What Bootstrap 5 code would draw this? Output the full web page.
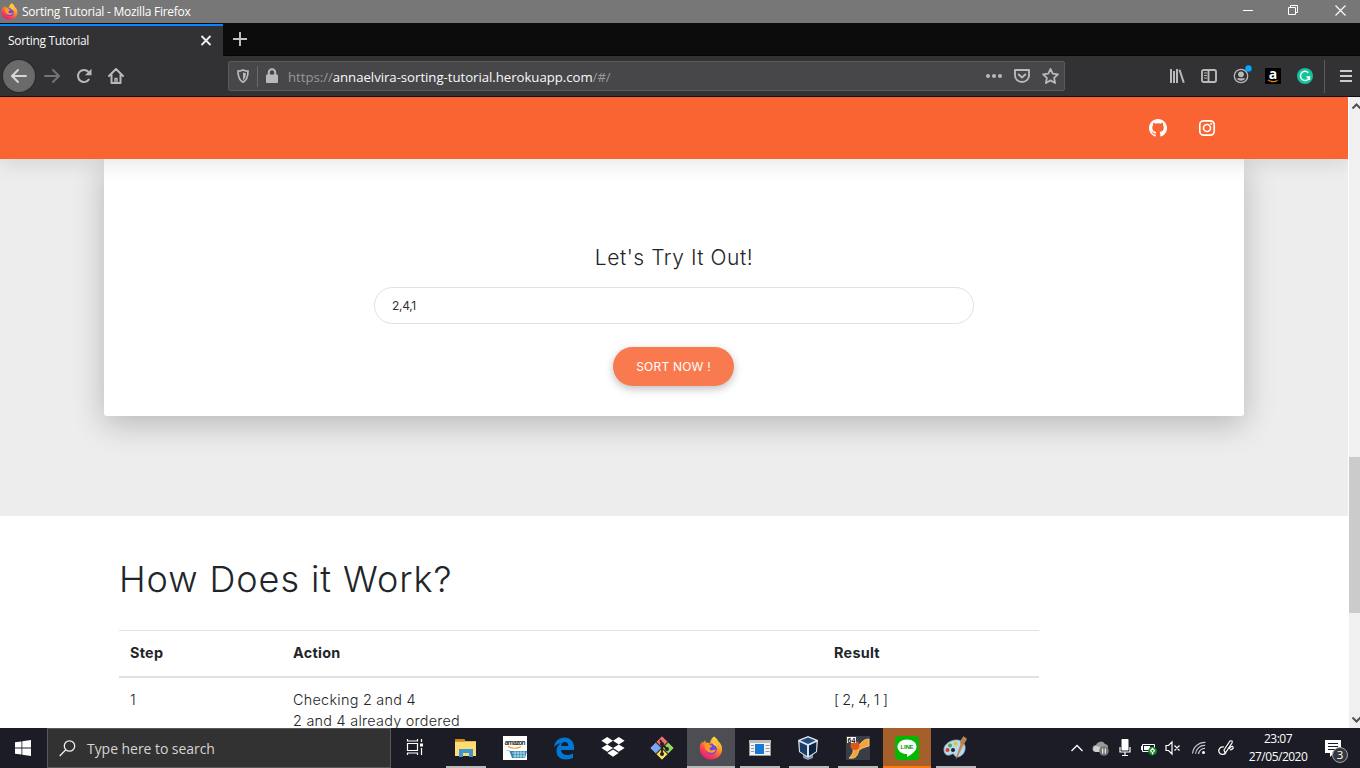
<!DOCTYPE html>
<html lang="en">
<head>
<meta charset="utf-8">
<meta name="viewport" content="width=device-width, initial-scale=1">
<title>Sorting Tutorial</title>
<link href="https://cdn.jsdelivr.net/npm/bootstrap@5.3.0/dist/css/bootstrap.min.css" rel="stylesheet">
<style>
body{height:768px;overflow:hidden;font-family:"Open Sans","Noto Sans",sans-serif;background:#fff}
svg{display:block;flex:none}
.title-bar{height:23px;background:#777;color:#fff;font-size:12px;letter-spacing:-.25px;line-height:23px}
.win-btn{width:38px;height:21px}
.win-restore{width:53px}
.win-close{width:40px}
.tab-strip{height:33px;background:#0c0c0d;border-bottom:1px solid #070708}
.ff-tab{width:223px;margin-top:1px;height:32px;background:#323234;border-top:2px solid #0a84ff;color:#f9f9fa;font-size:12px;letter-spacing:-.32px;margin-bottom:-1px}
.tool-bar{height:41px;background:#323234;border-bottom:1px solid #0f0f10;color:#b9b9ba}
.tool{width:32px;height:32px;display:flex;align-items:center;justify-content:center;flex:none}
.back-btn{background:#6a6a6b;border-radius:50%;box-shadow:0 0 0 1px #29292b;color:#d7d7d8;margin:0 1px 0 3px}
.url-box{width:837px;height:30px;background:#474749;border:1px solid #5b5b5d;border-radius:2px;margin-left:96px;font-size:13.2px}
.url-text{color:#98989a;letter-spacing:-.03px;white-space:nowrap;margin-left:10px;padding-top:3px}
.url-text span{color:#f9f9fa}
.tool-sep{width:1px;height:33px;background:#5b5b5d;margin:0 15px 0 3px}
.page-view{height:631px}
.site{width:1348px;height:631px;overflow:hidden;font-family:Inter,"Open Sans",sans-serif;font-weight:300;color:#212529}
.site-nav{height:62px;background:#fa6433;padding-right:132px;gap:31px;z-index:2;box-shadow:0 5px 20px rgba(0,0,0,.1)}
.hero{height:357px;background:#ededed}
.try-card{width:1140px;height:257px;border-radius:0 0 3px 3px;box-shadow:0 8px 32px rgba(0,0,0,.23);padding-top:83px}
.try-title{font-size:21px;line-height:32px;font-weight:300;letter-spacing:.53px;margin-bottom:13px}
.num-input{width:600px;height:37px;border:1px solid #e1e1e1;border-radius:19px;padding:0 17px;font-size:12px;font-weight:400;letter-spacing:-.3px;color:#333}
.num-input:focus{box-shadow:none}
.sort-btn{margin:23px 1px 0 0;width:121px;height:39px;border-radius:20px;border:0;background:#fa7a50;color:#fff;font-size:12px;letter-spacing:.2px;padding:0;box-shadow:0 3px 8px rgba(0,0,0,.25)}
.sort-btn:hover{background:#fa7a50;color:#fff}
.steps{width:1140px;padding:38px 15px 0}
.steps h2{font-size:36px;line-height:50px;font-weight:300;letter-spacing:.93px;margin-bottom:26px}
.step-table{width:920px;table-layout:fixed;font-size:14.4px;line-height:21px;color:#212529;letter-spacing:.27px}
.step-table>thead th{font-weight:700;padding:11px 11px 13px;border-top:1px solid #dee2e6;border-bottom:2px solid #dee2e6;height:46px;background:none}
.step-table>tbody td{padding:11px;border:0;background:none}
.step-table>tbody td.list-out{letter-spacing:-.35px}
.scroll-rail{width:12px;border-left:1px solid #fff;background:#f0f0f0}
.scroll-thumb{height:156px;background:#cbcbcb;margin-top:343px}
.task-bar{height:40px;background:#1b1c25;color:#fff}
.start-btn{width:47px;height:40px}
.search-box{width:344px;height:40px;background:#323232;border:1px solid #59595b;color:#d4d4d4;font-size:14px}
.app-btn{width:48px;height:40px;margin-right:1px;display:flex;flex-direction:column;align-items:center;flex:none}
.app-btn svg{margin-top:8px}
.app-btn.open-app::after{content:"";width:40px;height:2px;margin-top:6px;background:#b9b9b7}
.app-btn.wide-line::after{width:48px}
.app-btn.line-app{background:#a55f2a}
.app-btn.line-app::after{background:#ff7a0c}
.tray-icon{width:24px;height:40px;display:flex;align-items:center;justify-content:center;flex:none}
.clock{width:76px;font-size:12px;line-height:18px;letter-spacing:-.5px;text-align:center;padding-top:2px}
</style>
</head>
<body>
<svg width="0" height="0" class="position-absolute">
  <defs>
    <linearGradient id="fxBody" x1=".85" y1="0" x2=".25" y2="1"><stop offset="0" stop-color="#fff04a"/><stop offset=".4" stop-color="#ff9a28"/><stop offset=".72" stop-color="#ff4150"/><stop offset="1" stop-color="#e31587"/></linearGradient>
    <symbol id="firefox" viewBox="0 0 24 24">
      <path fill="url(#fxBody)" d="M15 .5c2.500 1.500 3.400 3 4.200 4.700C22.400 7.700 23.500 11 23 14.500 22.200 19.800 17.800 23.500 12 23.500 5.600 23.500.8 18.800.8 12.700c0-3 .9-5.500 2.400-7.200l.3 1.700C4.400 5.900 5.300 5 6.200 4.300l.5 2.200c1.600-.3 3 .1 4.200.8C11.300 4.600 12.700 2 15 .5z"/>
      <circle cx="12.400" cy="13" r="5.500" fill="#7048df"/>
      <path fill="#ff9a28" d="M5.500 8.300c2.300-1.200 4.200-.7 5.400.6l2.300.5c-.2 1.500-2.200 1.700-2.700 2.900-.2 1.300 1 2.500 3 2 1.300-.3 2-.8 3.200-.1-.8 1.800-2.700 2.800-4.900 2.600-4-.4-6.700-4-6.300-8.500z"/>
      <path fill="#ffd43a" d="M14.200 3.500c.5 3 4 4.300 4.400 9-.8-1.700-1.500-2.300-2.600-3-2-.8-3.200-3-1.800-6z"/>
    </symbol>
  </defs>
</svg>

<header class="title-bar d-flex align-items-center">
  <svg width="17" height="17" style="margin-left:1px"><use href="#firefox"/></svg>
  <span class="ms-1">Sorting Tutorial - Mozilla Firefox</span>
  <div class="ms-auto d-flex h-100">
    <div class="win-btn d-flex align-items-center justify-content-center"><svg width="11" height="11"><path d="M0 5.500h10" stroke="#fff"/></svg></div>
    <div class="win-btn win-restore d-flex align-items-center justify-content-center"><svg width="11" height="11" fill="none" stroke="#fff"><path d="M.5 2.500h7v7h-7zM2.500 2.500v-2h7v7h-2"/></svg></div>
    <div class="win-btn win-close d-flex align-items-center justify-content-center"><svg width="11" height="11"><path d="M.5.5l10 10m0-10l-10 10" stroke="#fff" stroke-width="1.100"/></svg></div>
  </div>
</header>

<div class="tab-strip d-flex">
  <div class="ff-tab d-flex align-items-center justify-content-between ps-2">
    <span>Sorting Tutorial</span>
    <svg class="me-2" width="18" height="18"><path d="M4.500 4l9 9m0-9l-9 9" stroke="#eee" stroke-width="1.900"/></svg>
  </div>
  <svg class="ms-2" width="18" height="32"><path d="M9 9v14M2 16h14" stroke="#c5c5c6" stroke-width="1.900"/></svg>
</div>

<nav class="tool-bar d-flex align-items-center">
  <div class="tool back-btn"><svg width="16" height="16" fill="none" stroke="currentColor" stroke-width="2" stroke-linecap="round" stroke-linejoin="round"><path d="M15 8H1.500M7 2L1 8l6 6"/></svg></div>
  <div class="tool" style="color:#747476"><svg width="16" height="16" fill="none" stroke="currentColor" stroke-width="2" stroke-linecap="round" stroke-linejoin="round"><path d="M1 8h13.500M9 2l6 6-6 6"/></svg></div>
  <div class="tool"><svg width="16" height="16"><path d="M13.200 11A6 6 0 1 1 12.500 4" fill="none" stroke="currentColor" stroke-width="2"/><path d="M15.500.8v6.500H9z" fill="currentColor"/></svg></div>
  <div class="tool"><svg width="16" height="16" fill="none" stroke="currentColor" stroke-width="2" stroke-linejoin="round" stroke-linecap="round"><path d="M1 8l7-7 7 7M3.500 7v8h9V7"/><path d="M7 14v-3.500h2V14" stroke-width="1.400"/></svg></div>

  <div class="url-box d-flex align-items-center">
    <svg width="29" height="28"><g transform="translate(7,7)"><path d="M7 1c2 .9 3.500 1.200 5 1.200 0 5.500-1 8.800-5 11-4-2.200-5-5.500-5-11C3.500 2.200 5 1.900 7 1z" fill="none" stroke="#b9b9ba" stroke-width="1.700"/><path d="M7 3.500v7.700c2-1.500 2.800-3.500 2.900-7z" fill="#b9b9ba"/></g><path d="M28.500 4v21" stroke="#6b6b6d"/></svg>
    <svg class="ms-2" width="12" height="16" fill="#b9b9ba"><path d="M1 6.500h10a1 1 0 0 1 1 1V14a1 1 0 0 1-1 1H1a1 1 0 0 1-1-1V7.500a1 1 0 0 1 1-1z"/><path d="M2.800 7V4.500a3.200 3.200 0 0 1 6.400 0V7" fill="none" stroke="#b9b9ba" stroke-width="2"/></svg>
    <div class="url-text">https://<span>annaelvira-sorting-tutorial.herokuapp.com</span>/#/</div>
    <div class="ms-auto d-flex align-items-center" style="gap:12px;margin-right:5px">
      <svg width="16" height="16" fill="#b9b9ba"><circle cx="2" cy="8" r="2"/><circle cx="8" cy="8" r="2"/><circle cx="14" cy="8" r="2"/></svg>
      <svg width="16" height="16" fill="none" stroke="#b9b9ba" stroke-width="1.900" stroke-linecap="round" stroke-linejoin="round"><path d="M1 2h14v5.500a7 6.500 0 0 1-14 0zM4.700 6.500L8 9.500l3.300-3"/></svg>
      <svg width="17" height="16" fill="none" stroke="#b9b9ba" stroke-width="1.800" stroke-linejoin="round"><path d="M8.500 1l2.200 4.600 5.200.7-3.800 3.500 1 5.200-4.600-2.600L3.900 15l1-5.200L1.100 6.300l5.200-.7z"/></svg>
    </div>
  </div>

  <div class="d-flex ms-auto align-items-center">
    <div class="tool"><svg width="16" height="16" fill="none" stroke="currentColor" stroke-width="2"><path d="M2 1v14M5 3v12M8 1v14M10.500 1.800l4.300 13"/></svg></div>
    <div class="tool"><svg width="16" height="16" fill="none" stroke="currentColor" stroke-width="1.900"><rect x="1" y="2" width="14" height="12" rx="1.700"/><path d="M7.500 2v12"/><path d="M3 5h3M3 7.500h3M3 10h3" stroke-width="1.200"/></svg></div>
    <div class="tool position-relative"><svg width="16" height="16"><circle cx="8" cy="8" r="6.700" fill="none" stroke="currentColor" stroke-width="1.300"/><circle cx="8" cy="6.300" r="2.900" fill="currentColor"/><path d="M3.700 10.200h8.600a5 5 0 0 1-8.600 0z" fill="currentColor"/></svg><svg class="position-absolute" style="left:20px;top:5px" width="7" height="7"><circle cx="3.500" cy="3.500" r="3.200" fill="#00a8ff"/></svg></div>
    <div class="tool"><svg width="16" height="16" overflow="visible"><rect width="16" height="16" rx="1" fill="#000"/><text x="8" y="11" font-family="Open Sans" font-size="14" font-weight="700" fill="#fff" text-anchor="middle">a</text><path d="M3 12q5 3 9.500.4" fill="none" stroke="#d9881b" stroke-width="1.200"/></svg></div>
    <div class="tool"><svg width="16" height="16"><circle cx="8" cy="8" r="8" fill="#15c39a"/><path d="M11.300 4.700A4.600 4.600 0 1 0 12.500 9H9.500M12.400 9v3" fill="none" stroke="#fff" stroke-width="1.500"/></svg></div>
    <div class="tool-sep"></div>
    <svg width="12" height="14" style="margin-right:8px" stroke="#cbcbcc" stroke-width="2"><path d="M0 2h12M0 7h12M0 12h12"/></svg>
  </div>
</nav>

<div class="page-view d-flex">
  <main class="site">
    <nav class="site-nav d-flex align-items-center justify-content-end position-relative">
      <svg width="18" height="18" viewBox="0 0 16 16" fill="#fff"><path d="M8 0C3.580 0 0 3.580 0 8c0 3.540 2.290 6.530 5.470 7.590.4.070.55-.17.55-.38 0-.19-.01-.82-.01-1.490-2.010.37-2.530-.49-2.690-.94-.09-.23-.48-.94-.82-1.130-.28-.15-.68-.52-.01-.53.63-.01 1.080.58 1.230.82.72 1.210 1.870.87 2.330.66.07-.52.28-.87.51-1.070-1.780-.2-3.640-.89-3.640-3.950 0-.87.31-1.590.82-2.150-.08-.2-.36-1.020.08-2.120 0 0 .67-.21 2.200.82.64-.18 1.320-.27 2-.27s1.360.09 2 .27c1.530-1.040 2.200-.82 2.200-.82.44 1.100.16 1.920.08 2.120.51.560.82 1.270.82 2.150 0 3.070-1.870 3.750-3.650 3.950.29.25.54.73.54 1.480 0 1.070-.01 1.930-.01 2.200 0 .21.15.46.55.38A8.010 8.010 0 0 0 16 8c0-4.420-3.580-8-8-8z"/></svg>
      <svg width="18" height="18" fill="none" stroke="#fff"><rect x="1.800" y="1.800" width="14.400" height="14.400" rx="3.900" stroke-width="1.700"/><circle cx="9" cy="9" r="3.500" stroke-width="1.700"/><circle cx="13.200" cy="4.800" r="1" fill="#fff" stroke="none"/></svg>
    </nav>
    <section class="hero">
      <div class="try-card bg-white mx-auto d-flex flex-column align-items-center">
        <h4 class="try-title">Let's Try It Out!</h4>
        <input class="form-control num-input" type="text" value="2,4,1" aria-label="Numbers">
        <button class="btn sort-btn" type="button">SORT NOW !</button>
      </div>
    </section>
    <section class="steps mx-auto">
      <h2>How Does it Work?</h2>
      <table class="table step-table mb-0">
        <colgroup><col style="width:163px"><col style="width:541px"><col></colgroup>
        <thead><tr><th>Step</th><th>Action</th><th>Result</th></tr></thead>
        <tbody><tr><td>1</td><td>Checking 2 and 4<br>2 and 4 already ordered</td><td class="list-out">[ 2, 4, 1 ]</td></tr></tbody>
      </table>
    </section>
  </main>
  <aside class="scroll-rail d-flex flex-column">
    <svg width="11" height="17"><path d="M3.500 11.500L7.500 7.500l4 4" fill="none" stroke="#505050" stroke-width="2"/></svg>
    <div class="scroll-thumb"></div>
    <svg class="mt-auto" width="11" height="17"><path d="M3.500 6.500l4 4 4-4" fill="none" stroke="#505050" stroke-width="2"/></svg>
  </aside>
</div>

<footer class="task-bar d-flex">
  <div class="start-btn d-flex align-items-center justify-content-center"><svg width="16" height="16" fill="#fff" style="margin-right:2px"><path d="M0 2.300l6.500-.9v6.200H0zM7.300 1.300L16 0v7.600H7.300zM0 8.400h6.500v6.200L0 13.700zM7.300 8.400H16V16l-8.700-1.300z"/></svg></div>
  <div class="search-box d-flex align-items-center"><svg style="margin-left:11px" width="17" height="17" fill="none" stroke="#eee" stroke-width="1.300"><circle cx="10.500" cy="6" r="5.200"/><path d="M6.800 9.800L.7 16"/></svg><span style="margin-left:11px;letter-spacing:-.05px">Type here to search</span></div>
  <div class="app-btn" style="margin-right:3px"><svg width="18" height="24" fill="none" stroke="#fff" stroke-width="1.200"><path d="M1.500 7.500h10v7h-10zM1.500 3v2h10V3M1.500 19v-2h10v2M15.500 3v3M15.500 12v7"/><path d="M14 7.500h3v3h-3z" fill="#fff" stroke="none"/></svg></div>
  <div class="app-btn open-app"><svg width="24" height="24"><path d="M1 3h9l1.500 2H22v15H1z" fill="#e8b33c"/><path d="M1 6h21v14H1z" fill="#ffdb73"/><path d="M1 3h9l1 2.500H1z" fill="#c88a17"/><path d="M5 21v-8h14v8h-4v-4H9v4z" fill="#3b96d8"/></svg></div>
  <div class="app-btn"><svg width="24" height="24"><path fill="#fff" d="M0 0h24v24H0z"/><text x="12" y="9" font-family="Open Sans" font-weight="700" font-size="6.500" fill="#333" text-anchor="middle" textLength="21">amazon</text><path d="M5 10.500q7 3.500 13 0" fill="none" stroke="#f39a1d" stroke-width="1.200"/><path d="M2 14h4l3 8h13l2-7H8" fill="#2b8ab5"/><path d="M9 17h13M10 20h12M12 15v7M15 15v7M18 15v7M21 15v7" stroke="#fff" stroke-width=".6" fill="none"/></svg></div>
  <div class="app-btn"><svg width="24" height="24"><path fill="#0078d7" d="M2 11C3 5 7 1.500 12.500 1.500c6 0 9.500 4.500 9.500 9.500v3H9c.2 3.500 3 5 6.300 5 2.300 0 4.200-.6 5.700-1.500v4.300c-2 1-4.200 1.600-7 1.600-5.800 0-9.500-3.300-9.500-8.500 0-3.700 2-6.600 5.300-8.200C7 7.500 4 8.500 2 11zM9.100 10h7.200c0-2.500-1.300-4-3.500-4s-3.500 1.700-3.700 4z"/></svg></div>
  <div class="app-btn"><svg width="24" height="24" fill="#fff"><path d="M6.200 1l5.800 3.700-5.800 3.700L.4 4.700zM17.800 1l5.800 3.700-5.800 3.700L12 4.700zM6.200 8.400l5.800 3.700-5.800 3.700L.4 12.100zM17.800 8.400l5.800 3.700-5.800 3.700L12 12.100zM12 13.500l5.600 3.600-5.600 3.600-5.600-3.600z"/></svg></div>
  <div class="app-btn"><svg width="24" height="24" stroke="#352b2a" stroke-width=".8"><path d="M12 0l5.800 5.800L12 11.600 6.200 5.800z" fill="#f26d6d"/><path d="M18.200 6.200L24 12l-5.800 5.800-5.800-5.800z" fill="#8fda62"/><path d="M5.800 6.200l5.800 5.800-5.800 5.800L0 12z" fill="#76a8f4"/><path d="M12 12.400l5.800 5.800L12 24l-5.800-5.800z" fill="#fbe05e"/><path d="M10 4l2 3v12M12 8l5 5" stroke="#251d1c" stroke-width="1.800" fill="none"/><circle cx="12" cy="8" r="1.700" fill="#251d1c"/><circle cx="17" cy="13" r="1.700" fill="#251d1c"/><circle cx="12" cy="18" r="1.700" fill="#251d1c"/></svg></div>
  <div class="app-btn open-app wide-line" style="background:#4d4e53"><svg width="24" height="24"><use href="#firefox"/></svg></div>
  <div class="app-btn open-app"><svg width="24" height="24"><path fill="#f3f3f3" stroke="#999" d="M1.500 4.500h21v15h-21z"/><path fill="#bbb" d="M1 4h22v3H1z"/><path fill="#1979d1" d="M7 8h9v10H7z"/><path stroke="#999" d="M3 9.500h3M3 12.500h3M3 15.500h3M17.500 9.500h4M17.500 12.500h4M17.500 15.500h4"/></svg></div>
  <div class="app-btn open-app"><svg width="24" height="24" style="margin-right:3px"><path d="M7 18l5 4 5-4v4l-5 2-5-2z" fill="#8796ab"/><path d="M12 0l10 4-1 12-9 6-9-6L2 4z" fill="#dce5ef"/><path d="M12 1.500L19.500 4.500 12 8 4.500 4.500z" fill="#234a79"/><path d="M3.500 6l7.500 3.500V20L4 15.500z" fill="#183b68"/><path d="M20.500 6L13 9.500V20l7-4.500z" fill="#0c2240"/></svg></div>
  <div class="app-btn open-app"><svg width="24" height="24"><path fill="#3b3d46" d="M0 0h24v24H0z"/><path d="M3 22c5 1 8-1 9-5 1-4 4-5 11-7V3c-5 0-7 3-10 6-2 2-5 3-8 2 4 3 2 7-2 11z" fill="#f2a33b" stroke="#ffda83" stroke-width=".8"/><circle cx="9" cy="9.500" r="4.500" fill="#df561d"/><path fill="#fff" d="M1 1h9v6H1z"/><text x="5.500" y="6.500" font-family="Liberation Sans" font-size="7" font-weight="700" text-anchor="middle" fill="#111">64</text></svg></div>
  <div class="app-btn open-app wide-line line-app"><svg width="24" height="24"><rect width="24" height="24" rx="4" fill="#00b900"/><path d="M12 3.500c5.500 0 9.500 3 9.500 7.200 0 4-4.500 7.500-9.500 10.300v-3c-5.500 0-9.500-3.300-9.500-7.300S6.500 3.500 12 3.500z" fill="#fff"/><text x="12" y="13" font-family="Liberation Sans" font-size="6" font-weight="700" text-anchor="middle" fill="#00a000" textLength="13">LINE</text></svg></div>
  <div class="app-btn open-app"><svg width="24" height="24" style="margin-right:2px"><path d="M12 4C5 5 0 10 1 15c1 5 5 5 8 3 3-1 2 4 6 3 5-1 8-6 7-11-1-4-5-6.500-10-6z" fill="#b7d9ec" stroke="#8baabd" stroke-width=".7"/><circle cx="4.500" cy="14" r="2" fill="#db3c34"/><circle cx="7" cy="9.500" r="2" fill="#48ab44"/><circle cx="12.500" cy="7.500" r="2" fill="#eac230"/><circle cx="10" cy="14" r="2" fill="#1c2633"/><path d="M13 23l5-15 2 1z" fill="#e3903e" stroke="#a95b23" stroke-width=".5"/><path d="M17.500 8c-1-3 1-5 3-8 1 2 4 1 3 4-1 2-2 3-3 5z" fill="#b58352"/></svg></div>

  <div class="ms-auto d-flex">
    <div class="tray-icon"><svg width="14" height="10"><path d="M1.500 8L7 2.500 12.500 8" fill="none" stroke="#fff" stroke-width="1.300"/></svg></div>
    <div class="tray-icon"><svg width="18" height="18"><path d="M4 13a3.500 3.500 0 0 1 0-7 5 5 0 0 1 9-1 3.500 3.500 0 0 1 3 4v4z" fill="#9a9a9a"/><path d="M2 12a3 3 0 0 1 2-5q4 0 6 4v2H4z" fill="#d0d0d0"/><circle cx="12" cy="12" r="4.800" fill="#777"/><path d="M10.700 9.500v5M13.300 9.500v5" stroke="#fff"/></svg></div>
    <div class="tray-icon"><svg width="12" height="18"><rect x="2.500" y="0" width="7" height="11.500" rx=".8" fill="#fff"/><path d="M1 8v5h10V8M6 13v3M3 16.500h6" fill="none" stroke="#fff" stroke-width="1.200"/></svg></div>
    <div class="tray-icon"><svg width="16" height="16"><path d="M1.500 4.500h12v7h-12z" fill="none" stroke="#fff"/><path fill="#fff" d="M3 6h6v4H3zM0 6h1v4H0z"/><circle cx="11.500" cy="11" r="4.300" fill="#118f24"/><path d="M11.500 8.300l2 2.500-2 2-2-2zM11.500 12v2.500" fill="none" stroke="#fff" stroke-width="1.100"/></svg></div>
    <div class="tray-icon"><svg width="16" height="16" fill="none" stroke="#fff" stroke-width="1.200"><path d="M1 5.500h2.500L7 2v12l-3.500-3.500H1zM9.500 5.500l5 5m0-5l-5 5"/></svg></div>
    <div class="tray-icon" style="width:27px"><svg width="16" height="16" fill="none" stroke="#ccc" stroke-width="1.200"><path d="M2 14A12 12 0 0 1 14 2M5 14A9 9 0 0 1 14 5M8 14a6 6 0 0 1 6-6" transform="rotate(4 8 8)"/><circle cx="12.500" cy="12.500" r="1.500" fill="#fff" stroke="none"/></svg></div>
    <div class="tray-icon" style="width:28px"><svg width="18" height="18" fill="none" stroke="#fff" stroke-width="1.200"><path d="M8 14l-1-3 6-9q3-1 2 2L9 13zM7 8c-3-1-6 2-5 5s5 3 7 1M12 10q3-4 4-2t-3 3"/></svg></div>
    <div class="clock">23:07<br>27/05/2020</div>
    <div style="width:44px;height:40px"><svg width="44" height="40"><path d="M9 12h16v13H18l-4 4v-4H9z" fill="#fff"/><path d="M12 15.500h10M12 18.500h10M12 21.500h7" stroke="#1b1c25"/><circle cx="24" cy="27" r="7.500" fill="#37383e" stroke="#a3a3a6"/><text x="24" y="31" font-family="Open Sans" font-size="11.500" fill="#fff" text-anchor="middle">3</text></svg></div>
  </div>
</footer>
<script src="https://cdn.jsdelivr.net/npm/bootstrap@5.3.0/dist/js/bootstrap.bundle.min.js"></script>
</body>
</html>
